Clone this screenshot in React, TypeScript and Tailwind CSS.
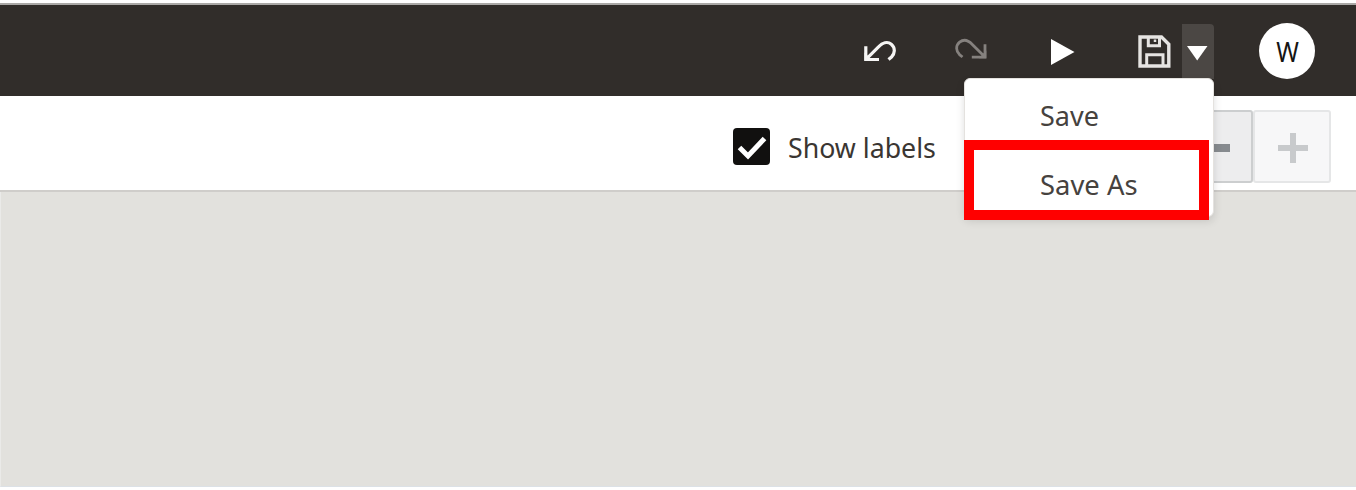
function UndoIcon() {
  return (
    <svg width="36" height="28" viewBox="0 0 36 28" fill="none" stroke="#f6f5f4" strokeWidth="3.2" className="shrink-0">
      <path d="M4.800 9.300V22.500H18M5.500 21.800L17.500 9.800C21.500 5.600 26.500 4 30.300 7.200C34.600 10.800 34 16.500 30.500 20L27.500 22.500" />
      <path d="M3.500 15.500L11 23.500H3.500Z" fill="#f6f5f4" stroke="none" />
    </svg>
  );
}

function RedoIcon() {
  return (
    <svg width="36" height="28" viewBox="0 0 36 28" fill="none" stroke="#85817e" strokeWidth="2.8" className="shrink-0">
      <path d="M31 8.300V21.200H17.800M30.500 20.600L18.300 8.400C14.300 4.300 9.500 3 5.600 6.200C1.400 9.800 2 15.200 5.500 18.600L8.500 21" />
      <path d="M32.300 14.500L25 22.300H32.300Z" fill="#85817e" stroke="none" />
    </svg>
  );
}

function SaveIcon() {
  return (
    <svg width="33" height="33" viewBox="0 0 33 33" fill="none" stroke="#e6e4e2" strokeWidth="3.4" className="shrink-0">
      <path d="M2 2H23.500L30.800 9.300V31H2Z" />
      <path d="M10.300 2V10.700H21.500V2M8.700 31V19.700H25V31" strokeWidth="3" />
      <path d="M17 4.500V7" strokeWidth="2.500" />
    </svg>
  );
}

function TopBar() {
  return (
    <header className="flex h-[93px] shrink-0 items-start border-t-2 border-[#aaa8a6] bg-[#312d2a] pt-[18px] text-white">
      <div className="ml-[861px] flex h-14 items-center">
        <UndoIcon />
      </div>
      <div className="ml-[57px] flex h-[54px] items-center">
        <RedoIcon />
      </div>
      <div className="ml-[61px] flex h-[58px] items-center">
        <svg width="24" height="26" viewBox="0 0 24 26" fill="white">
          <path d="M0 0L23.500 13L0 26Z" />
        </svg>
      </div>
      <div className="ml-[63px] flex h-14 items-center">
        <SaveIcon />
      </div>
      <div className="relative ml-[11px] mt-px h-[55px] w-8 rounded-tr bg-[#4b4744]">
        <svg width="32" height="55" viewBox="0 0 32 55" fill="white">
          <path d="M5 22H25.500L15.200 36.500Z" />
        </svg>
        <SaveMenu />
      </div>
      <div className="ml-[45px] flex size-14 items-center justify-center rounded-full bg-white pl-px pt-0.5 font-['Noto_Sans',sans-serif] text-[27px] text-[#161513]">
        <span className="scale-x-90">W</span>
      </div>
    </header>
  );
}

function SaveMenu() {
  return (
    <div className="absolute right-0 top-[54px] z-10 h-[139px] w-[250px] rounded-md border border-[#e4e2df] bg-white font-['Noto_Sans',sans-serif] text-[27px] leading-9 text-[#46423e] shadow-[0_4px_8px_rgba(0,0,0,0.13)]">
      <div className="h-[61px] pl-[75px] pt-[19px]">
        <span className="inline-block">Save</span>
      </div>
      <div className="-ml-px h-20 w-[245px] border-[10px] border-[#ff0000] pl-[66px] pt-[17px]">
        <span className="inline-block origin-left scale-x-[1.015] whitespace-nowrap">Save As</span>
      </div>
    </div>
  );
}

function Toolbar() {
  return (
    <div className="flex h-24 shrink-0 items-start border-b-2 border-[#cfcdca] bg-white">
      <label className="ml-[733px] mt-8 flex h-[37px] items-center gap-[18px] font-['Noto_Sans',sans-serif] text-[27px] text-[#3a3632]">
        <span className="flex size-[37px] items-center justify-center rounded-[4px] bg-[#11100f]">
          <svg width="30" height="26" viewBox="0 0 30 26" fill="none" stroke="white" strokeWidth="5">
            <path d="M2.500 13.500L11 22L27.500 4.500" />
          </svg>
        </span>
        <span className="w-[180px] origin-left scale-x-[0.99] whitespace-nowrap pt-1">Show labels</span>
      </label>
      <div className="ml-[212px] mt-[14px] flex">
        <div className="flex h-[73px] w-[73px] items-center justify-center rounded-[3px] border-2 border-[#cccecf] bg-[#ededee] pr-[5px] pt-0.5">
          <svg width="32" height="32" viewBox="0 0 32 32">
            <path d="M0 12H32V20H0Z" fill="#878b8f" />
          </svg>
        </div>
        <div className="flex h-[73px] w-[78px] items-center justify-center rounded-[3px] border-2 border-[#e5e6e7] bg-[#f7f7f8] pl-0.5 pt-0.5">
          <svg width="30" height="30" viewBox="0 0 30 30">
            <path d="M12 0H18V12H30V18H18V30H12V18H0V12H12Z" fill="#c8cacc" />
          </svg>
        </div>
      </div>
    </div>
  );
}

export default function App() {
  return (
    <div className="flex h-[490px] w-[1356px] flex-col overflow-hidden bg-white pt-[3px]">
      <TopBar />
      <Toolbar />
      <main className="h-[295px] shrink-0 border-b border-l border-b-[#dce1e6] border-l-[#eaeae8] bg-[#e2e1dd]" />
    </div>
  );
}
